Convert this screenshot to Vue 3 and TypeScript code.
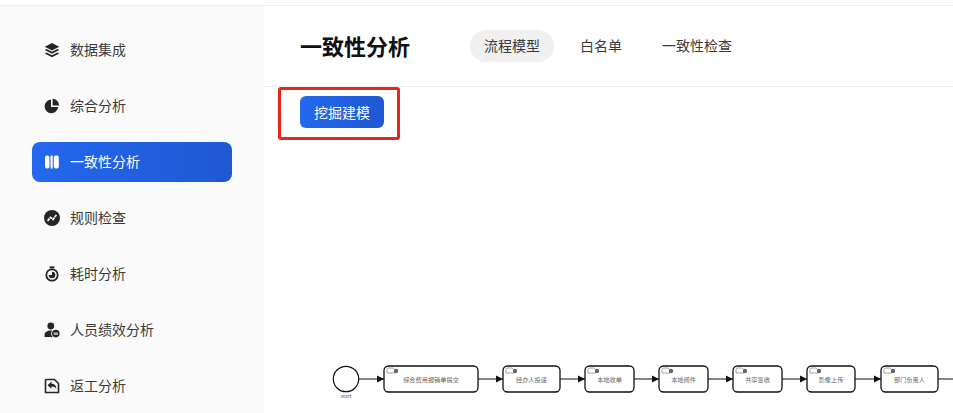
<script setup lang="ts">
const menu = [
  { label: '数据集成', icon: 'layers' },
  { label: '综合分析', icon: 'pie' },
  { label: '一致性分析', icon: 'columns', active: true },
  { label: '规则检查', icon: 'chart' },
  { label: '耗时分析', icon: 'timer' },
  { label: '人员绩效分析', icon: 'user' },
  { label: '返工分析', icon: 'rework' },
]
const tabs = ['流程模型', '白名单', '一致性检查']
const tasks = [
  { x: 59, w: 94, label: '综合费用报销单提交' },
  { x: 178, w: 57, label: '经办人投递' },
  { x: 260, w: 49, label: '本地收单' },
  { x: 334, w: 49, label: '本地阅件' },
  { x: 408, w: 49, label: '共享签收' },
  { x: 482, w: 48, label: '影像上传' },
  { x: 556, w: 57, label: '部门负责人' },
]
const arrows = [
  [34, 59], [153, 178], [235, 260], [309, 334], [383, 408], [457, 482], [530, 556],
]
</script>

<template>
  <div class="page">
    <div class="top"></div>
    <div class="body">
      <aside class="side">
        <div v-for="m in menu" :key="m.label" class="item" :class="{ active: m.active }">
          <svg class="ico" viewBox="0 0 16 16" fill="currentColor">
            <template v-if="m.icon === 'layers'">
              <path d="M8 1 15.2 4.7 8 8.4 .8 4.7Z" />
              <path d="M2.6 7 8 9.8 13.4 7 15.2 8 8 11.8 .8 8Z" />
              <path d="M2.6 10.4 8 13.2 13.4 10.4 15.2 11.4 8 15.2 .8 11.4Z" />
            </template>
            <template v-else-if="m.icon === 'pie'">
              <path d="M7 1.6A6.8 6.8 0 1 0 14.2 9H7Z" />
              <path d="M8.6 .8A6.8 6.8 0 0 1 15 7.4H8.6Z" />
            </template>
            <template v-else-if="m.icon === 'columns'">
              <rect x="1" y="1.5" width="4.4" height="13" rx="2" />
              <rect x="6.5" y="1.5" width="2.2" height="13" />
              <rect x="9.8" y="1.5" width="5" height="13" rx="2" />
            </template>
            <template v-else-if="m.icon === 'chart'">
              <circle cx="8" cy="8" r="8" />
              <path d="M3.6 11 6.4 7.4 9 9.4 12.4 5" fill="none" stroke="#fafafa" stroke-width="1.8" stroke-dasharray="3 .6" />
            </template>
            <template v-else-if="m.icon === 'timer'">
              <rect x="5.6" y="0.4" width="4.8" height="2" />
              <circle cx="8" cy="9" r="5.7" fill="none" stroke="currentColor" stroke-width="1.8" />
              <path d="M8 5.7A3.3 3.3 0 1 1 4.7 9H8Z" />
            </template>
            <template v-else-if="m.icon === 'user'">
              <circle cx="6.8" cy="4" r="3.4" />
              <path d="M.6 15V12.6C.6 10 3.4 8.4 6.8 8.4 7.6 8.4 8.2 8.5 8.2 8.5 6.6 10.8 7 13.2 8.4 15Z" />
              <circle cx="11.8" cy="11.6" r="3.8" />
              <path d="M9.6 11.1H13.8M14 12.2H9.8" stroke="#fafafa" stroke-width="0.9" />
            </template>
            <template v-else>
              <path d="M2.5 1.5H10.5L14.5 5.5V14.5H1.5V2.5A1 1 0 0 1 2.5 1.5Z" fill="none" stroke="currentColor" stroke-width="1.6" />
              <path d="M7.5 3.6V5.8C10.5 5.8 12.4 7.7 12.4 10.9 11.3 9.2 9.7 8.5 7.5 8.6V10.8L3.6 7.2Z" />
            </template>
          </svg>
          <span class="itxt">{{ m.label }}</span>
        </div>
      </aside>
      <main class="main">
        <header class="head">
          <h1 class="title">一致性分析</h1>
          <nav class="tabs">
            <span v-for="(t, i) in tabs" :key="t" class="tab" :class="{ on: i === 0 }">{{ t }}</span>
          </nav>
        </header>
        <div class="content">
          <div class="action">
            <button class="btn">挖掘建模</button>
            <div class="mark"></div>
          </div>
          <svg class="flow" width="628" height="50" viewBox="0 0 628 50">
            <defs>
              <marker id="ah" markerWidth="7" markerHeight="8" refX="7" refY="4" orient="auto" markerUnits="userSpaceOnUse">
                <path d="M0 .5 7 4 0 7.5Z" fill="#111" />
              </marker>
            </defs>
            <circle cx="21" cy="20" r="12.7" fill="#fff" stroke="#111" stroke-width="1.2" />
            <text x="21" y="38.5" class="small">start</text>
            <line v-for="a in arrows" :key="a[0]" :x1="a[0]" y1="20" :x2="a[1]" y2="20" stroke="#333" stroke-width="1.2" marker-end="url(#ah)" />
            <line x1="613" y1="20" x2="628" y2="20" stroke="#333" stroke-width="1.2" />
            <g v-for="t in tasks" :key="t.x">
              <rect :x="t.x" y="7" :width="t.w" height="26" rx="4.5" fill="#fff" stroke="#111" stroke-width="1.3" />
              <path :d="`M${t.x + 3} 14V10.5Q${t.x + 3} 9 ${t.x + 5} 9H${t.x + 9}L${t.x + 11} 11V14H${t.x + 3}Z`" fill="#fff" stroke="#666" stroke-width="0.6" />
              <circle :cx="t.x + 12" cy="12" r="2.2" fill="#666" />
              <text :x="t.x + t.w / 2" y="22.5" class="lbl">{{ t.label }}</text>
            </g>
          </svg>
        </div>
      </main>
    </div>
  </div>
</template>

<style>
html, body { margin: 0; overflow: hidden; background: #fff; }
</style>

<style scoped>
.page {
  width: 953px;
  height: 413px;
  overflow: hidden;
  display: flex;
  flex-direction: column;
  font-family: "Noto Sans CJK SC", "Noto Sans", sans-serif;
  color: #333;
}
.top {
  height: 5px;
  flex: none;
  border-bottom: 1px solid #eeeeee;
}
.body {
  flex: 1;
  min-height: 0;
  display: flex;
}
.side {
  width: 264px;
  flex: none;
  box-sizing: border-box;
  padding: 24px 32px 0;
  background: #fafafa;
  display: flex;
  flex-direction: column;
  gap: 16px;
}
.item {
  width: 200px;
  height: 40px;
  flex: none;
  box-sizing: border-box;
  padding-left: 12px;
  display: flex;
  align-items: center;
  gap: 10px;
  border-radius: 8px;
  font-size: 14px;
  color: #3a3a3a;
}
.itxt {
  line-height: 20px;
  padding-bottom: 2px;
}
.item.active {
  background: linear-gradient(90deg, #2468ee, #1f58d2);
  color: #fff;
}
.ico {
  width: 16px;
  height: 16px;
  flex: none;
  color: #262626;
}
.active .ico { color: #fff; }
.main {
  flex: 1;
  min-width: 0;
  display: flex;
  flex-direction: column;
}
.head {
  height: 81px;
  flex: none;
  box-sizing: border-box;
  border-bottom: 1px solid #eeeeee;
  padding-left: 36px;
  display: flex;
  align-items: center;
  gap: 60px;
}
.title {
  margin: 0 0 3px;
  font-size: 22px;
  line-height: 32px;
  font-weight: 700;
  color: #111;
}
.tabs {
  display: flex;
  gap: 12px;
}
.tab {
  height: 32px;
  line-height: 30px;
  padding: 0 14px;
  border-radius: 16px;
  font-size: 14px;
  color: #3a3a3a;
}
.tab.on { background: #f0f0f0; }
.content {
  flex: 1;
  min-height: 0;
  padding: 9px 0 0 36px;
  display: flex;
  flex-direction: column;
}
.action {
  position: relative;
  align-self: flex-start;
}
.btn {
  display: block;
  width: 84px;
  height: 32px;
  border: 0;
  border-radius: 6px;
  padding: 0;
  background: linear-gradient(90deg, #2468ee, #1f58d2);
  color: #fff;
  font: 14px "Noto Sans CJK SC", sans-serif;
}
.mark {
  position: absolute;
  left: -22px;
  top: -9px;
  width: 122px;
  height: 53px;
  box-sizing: border-box;
  border: 3px solid #e8261c;
  border-radius: 3px;
}
.flow {
  display: block;
  margin: 231px 0 0 25px;
  flex: none;
}
.lbl {
  font-size: 6.2px;
  text-anchor: middle;
  fill: #666;
}
.small {
  font-size: 5px;
  text-anchor: middle;
  fill: #555;
}
</style>
